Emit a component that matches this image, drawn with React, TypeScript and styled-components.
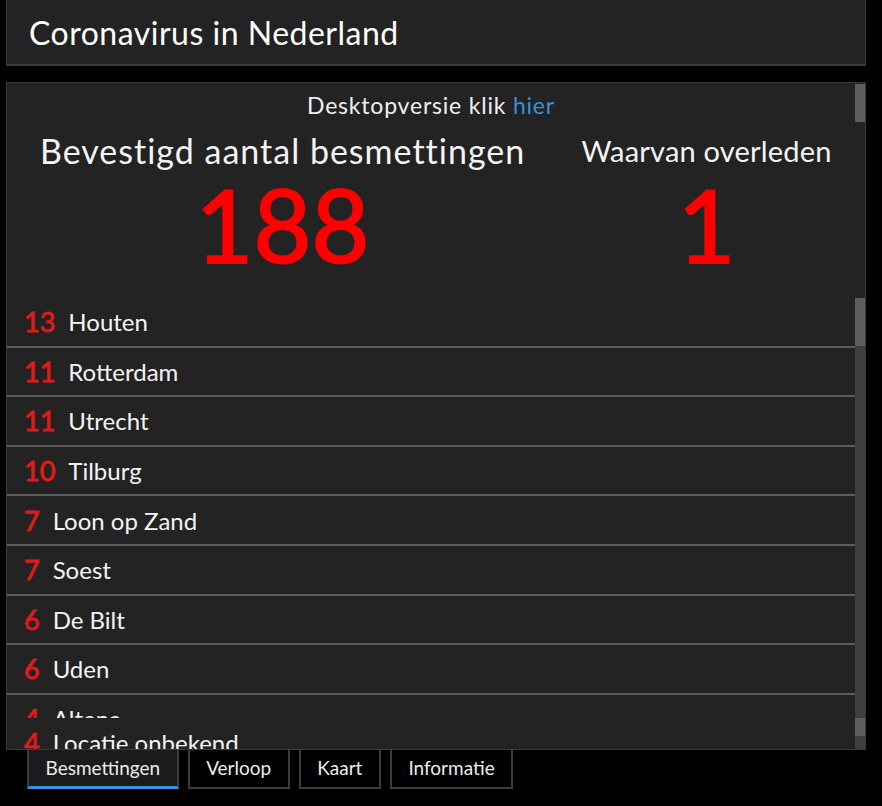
import styled, { createGlobalStyle } from "styled-components";

const GlobalStyle = createGlobalStyle`
    html, body {
        margin: 0;
        padding: 0;
        background: #000;
    }
    body {
        font-family: Lato, "Noto Sans", sans-serif;
        color: #f2f2f2;
    }
`

const Page = styled.div`
    width: 882px;
    height: 806px;
    padding-left: 6px;
    box-sizing: border-box;
    display: flex;
    flex-direction: column;
    overflow: hidden;
`

const Header = styled.header`
    width: 860px;
    height: 66px;
    box-sizing: border-box;
    background: #232323;
    border: 1px solid #3a3a3a;
    border-top: none;
    border-bottom-width: 2px;
    display: flex;
    align-items: center;
    padding-left: 22px;

    h1 {
        margin: 0;
        font-size: 32px;
        letter-spacing: 0.5px;
        font-weight: 400;
        color: #fff;
    }
`

const Panel = styled.main`
    margin-top: 16px;
    width: 860px;
    height: 668px;
    box-sizing: border-box;
    background: #232323;
    border: 1px solid #3a3a3a;
    display: flex;
    flex-direction: column;
    overflow: hidden;
    position: relative;
    z-index: 1;
`

const Section = styled.div<{ $h?: number }>`
    display: flex;
    height: ${p => p.$h ? `${p.$h}px` : "auto"};
    flex: ${p => p.$h ? "none" : "1"};
    min-height: 0;
`

const Content = styled.div`
    flex: 1;
    min-width: 0;
    display: flex;
    flex-direction: column;
`

const Track = styled.div<{ $bg: string }>`
    width: 10px;
    flex: none;
    background: ${p => p.$bg};
    display: flex;
    flex-direction: column;
`

const Thumb = styled.div<{ $h: number; $top?: number }>`
    height: ${p => p.$h}px;
    margin-top: ${p => p.$top ?? 0}px;
    background: #5e5e5e;
`

const DesktopLine = styled.p`
    margin: 8px 0 0;
    text-align: center;
    font-size: 23px;
    letter-spacing: 0.8px;
    line-height: 28px;
    color: #f0f0f0;

    a {
        color: #3a91db;
        text-decoration: none;
    }
`

const Stats = styled.div`
    display: flex;
    margin-top: 12px;
`

const Stat = styled.div<{ $w: string }>`
    width: ${p => p.$w};
    display: flex;
    flex-direction: column;
    align-items: center;
`

const StatLabel = styled.div<{ $size: number; $ls: number }>`
    font-size: ${p => p.$size}px;
    letter-spacing: ${p => p.$ls}px;
    line-height: 40px;
    color: #f4f4f4;
`

const StatValue = styled.div`
    font-size: 100px;
    line-height: 106px;
    color: #ff0000;
    -webkit-text-stroke: 2px #ff0000;
`

const Viewport = styled.div`
    height: 420px;
    overflow: hidden;
    flex: none;
`

const Row = styled.div<{ $last?: boolean }>`
    height: 49.6px;
    flex: none;
    box-sizing: border-box;
    border-bottom: ${p => p.$last ? "none" : "2px solid #5c5c5c"};
    display: flex;
    align-items: center;
    gap: 13px;
    padding-left: 17px;
`

const Count = styled.span`
    font-size: 27px;
    color: #e21a1a;
    -webkit-text-stroke: 0.8px #e21a1a;
`

const Place = styled.span`
    font-size: 24px;
    color: #f4f4f4;
`

const Tabs = styled.nav`
    display: flex;
    gap: 9px;
    padding-left: 21px;
    margin-top: -2px;
`

const Tab = styled.div<{ $active?: boolean }>`
    height: 41px;
    box-sizing: border-box;
    padding: 0 16.5px;
    display: flex;
    align-items: center;
    font-size: 19px;
    color: #ececec;
    background: ${p => p.$active ? "#1b1b1b" : "#000"};
    border: 2px solid #3c3c3c;
    border-top: none;
    border-bottom: ${p => p.$active ? "3px solid #3d8fd6" : "2px solid #3c3c3c"};
`

const places: [number, string][] = [
    [13, "Houten"],
    [11, "Rotterdam"],
    [11, "Utrecht"],
    [10, "Tilburg"],
    [7, "Loon op Zand"],
    [7, "Soest"],
    [6, "De Bilt"],
    [6, "Uden"],
    [4, "Altena"],
]

export default function App() {
    return (
        <Page>
            <GlobalStyle />
            <Header>
                <h1>Coronavirus in Nederland</h1>
            </Header>
            <Panel>
                <Section $h={215}>
                    <Content>
                        <DesktopLine>Desktopversie klik <a href="#">hier</a></DesktopLine>
                        <Stats>
                            <Stat $w="65%">
                                <StatLabel $size={34} $ls={1}>Bevestigd aantal besmettingen</StatLabel>
                                <StatValue>188</StatValue>
                            </Stat>
                            <Stat $w="35%">
                                <StatLabel $size={29} $ls={0.2}>Waarvan overleden</StatLabel>
                                <StatValue>1</StatValue>
                            </Stat>
                        </Stats>
                    </Content>
                    <Track $bg="#232323">
                        <Thumb $h={38} $top={1} />
                    </Track>
                </Section>
                <Section>
                    <Content>
                        <Viewport>
                            {places.map(([n, name]) => (
                                <Row key={name}>
                                    <Count>{n}</Count>
                                    <Place>{name}</Place>
                                </Row>
                            ))}
                        </Viewport>
                        <Row $last>
                            <Count>4</Count>
                            <Place>Locatie onbekend</Place>
                        </Row>
                    </Content>
                    <Track $bg="#3e3e3e">
                        <Thumb $h={48} />
                        <Thumb $h={18} $top={372} />
                    </Track>
                </Section>
            </Panel>
            <Tabs>
                <Tab $active>Besmettingen</Tab>
                <Tab>Verloop</Tab>
                <Tab>Kaart</Tab>
                <Tab>Informatie</Tab>
            </Tabs>
        </Page>
    )
}
